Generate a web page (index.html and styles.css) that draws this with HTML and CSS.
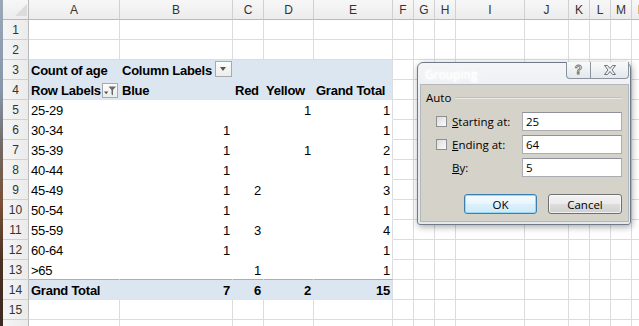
FILE: index.html
```html
<!DOCTYPE html>
<html lang="en">
<head>
    <meta charset="UTF-8">
    <title>Count of age - Pivot</title>
    <link rel="stylesheet" href="styles.css">
</head>
<body>
    <div class="desk"></div>

    <div class="sheet">
        <div class="row hd">
            <span class="corner"><svg width="14" height="14" viewBox="0 0 14 14"><path d="M13 1V13H1z" fill="#dcdcdc"/></svg></span>
            <span>A</span><span>B</span><span>C</span><span>D</span><span>E</span><span>F</span><span>G</span><span>H</span><span>I</span><span>J</span><span>K</span><span>L</span><span>M</span><span>N</span>
        </div>

        <div class="row"><span class="rh">1</span><span></span><span></span><span></span><span></span><span></span><span></span><span></span><span></span><span></span><span></span><span></span><span></span><span></span><span></span></div>
        <div class="row"><span class="rh">2</span><span></span><span></span><span></span><span></span><span></span><span></span><span></span><span></span><span></span><span></span><span></span><span></span><span></span><span></span></div>

        <!-- pivot header -->
        <div class="row">
            <span class="rh">3</span>
            <span class="pv bd b">Count of age</span>
            <span class="pv bd b fl"><span>Column Labels</span><i class="dd"></i></span>
            <span class="pv bd"></span><span class="pv bd"></span><span class="pv bd e"></span>
            <span></span><span></span><span></span><span></span><span></span><span></span><span></span><span></span><span></span>
        </div>
        <div class="row">
            <span class="rh">4</span>
            <span class="pv bd b fl"><span>Row Labels</span><i class="flt"><svg width="14" height="13" viewBox="0 0 14 13"><path d="M1 7.5h4.4L3.2 10.2z" fill="#5a5a5a"/><path d="M5.5 2.5h7.5l-3 3.6v5.4l-1.5-1.2V6.1z" fill="#6a6a6a"/></svg></i></span>
            <span class="pv bd b">Blue</span>
            <span class="pv bd b">Red</span>
            <span class="pv bd b">Yellow</span>
            <span class="pv bd b e">Grand Total</span>
            <span></span><span></span><span></span><span></span><span></span><span></span><span></span><span></span><span></span>
        </div>

        <!-- pivot body -->
        <div class="row"><span class="rh">5</span><span class="pv">25-29</span><span class="pv n"></span><span class="pv n"></span><span class="pv n">1</span><span class="pv n e">1</span><span></span><span></span><span></span><span></span><span></span><span></span><span></span><span></span><span></span></div>
        <div class="row"><span class="rh">6</span><span class="pv">30-34</span><span class="pv n">1</span><span class="pv n"></span><span class="pv n"></span><span class="pv n e">1</span><span></span><span></span><span></span><span></span><span></span><span></span><span></span><span></span><span></span></div>
        <div class="row"><span class="rh">7</span><span class="pv">35-39</span><span class="pv n">1</span><span class="pv n"></span><span class="pv n">1</span><span class="pv n e">2</span><span></span><span></span><span></span><span></span><span></span><span></span><span></span><span></span><span></span></div>
        <div class="row"><span class="rh">8</span><span class="pv">40-44</span><span class="pv n">1</span><span class="pv n"></span><span class="pv n"></span><span class="pv n e">1</span><span></span><span></span><span></span><span></span><span></span><span></span><span></span><span></span><span></span></div>
        <div class="row"><span class="rh">9</span><span class="pv">45-49</span><span class="pv n">1</span><span class="pv n">2</span><span class="pv n"></span><span class="pv n e">3</span><span></span><span></span><span></span><span></span><span></span><span></span><span></span><span></span><span></span></div>
        <div class="row"><span class="rh">10</span><span class="pv">50-54</span><span class="pv n">1</span><span class="pv n"></span><span class="pv n"></span><span class="pv n e">1</span><span></span><span></span><span></span><span></span><span></span><span></span><span></span><span></span><span></span></div>
        <div class="row"><span class="rh">11</span><span class="pv">55-59</span><span class="pv n">1</span><span class="pv n">3</span><span class="pv n"></span><span class="pv n e">4</span><span></span><span></span><span></span><span></span><span></span><span></span><span></span><span></span><span></span></div>
        <div class="row"><span class="rh">12</span><span class="pv">60-64</span><span class="pv n">1</span><span class="pv n"></span><span class="pv n"></span><span class="pv n e">1</span><span></span><span></span><span></span><span></span><span></span><span></span><span></span><span></span><span></span></div>
        <div class="row"><span class="rh">13</span><span class="pv ln">&gt;65</span><span class="pv n ln"></span><span class="pv n ln">1</span><span class="pv n ln"></span><span class="pv n e ln">1</span><span></span><span></span><span></span><span></span><span></span><span></span><span></span><span></span><span></span></div>

        <!-- grand total -->
        <div class="row"><span class="rh">14</span><span class="pv bd b">Grand Total</span><span class="pv bd b n">7</span><span class="pv bd b n">6</span><span class="pv bd b n">2</span><span class="pv bd b n e">15</span><span></span><span></span><span></span><span></span><span></span><span></span><span></span><span></span><span></span></div>

        <div class="row"><span class="rh">15</span><span></span><span></span><span></span><span></span><span></span><span></span><span></span><span></span><span></span><span></span><span></span><span></span><span></span><span></span></div>
        <div class="row"><span class="rh"></span><span></span><span></span><span></span><span></span><span></span><span></span><span></span><span></span><span></span><span></span><span></span><span></span><span></span><span></span></div>
    </div>

    <!-- grouping dialog -->
    <div class="dlg">
        <div class="cap">
            <span class="ttl">Grouping</span>
            <div class="cbs">
                <span class="cb help">?</span>
                <span class="cb close"><svg width="12" height="10" viewBox="0 0 12 10"><path d="M.5.5h3l2.5 3 2.5-3h3L8 5l3.5 4.5h-3L6 6.5l-2.5 3h-3L4 5z" fill="#f2f2f2" stroke="#6b737b" stroke-width="1"/></svg></span>
            </div>
        </div>
        <div class="dbody">
            <div class="legend"><span>Auto</span><i class="rule"></i></div>
            <div class="frow"><span class="chk"></span><span class="lbl"><u>S</u>tarting at:</span><span class="inp">25</span></div>
            <div class="frow"><span class="chk"></span><span class="lbl"><u>E</u>nding at:</span><span class="inp">64</span></div>
            <div class="frow"><span class="chk off"></span><span class="lbl"><u>B</u>y:</span><span class="inp">5</span></div>
            <div class="btns">
                <button class="btn ok">OK</button>
                <button class="btn">Cancel</button>
            </div>
        </div>
    </div>
</body>
</html>
```

FILE: styles.css
```css
body {
    margin: 0;
    width: 639px;
    height: 326px;
    overflow: hidden;
    display: flex;
    position: relative;
    background: #fff;
    font-family: "Liberation Sans", Arial, sans-serif;
}

/* bit of desktop showing at the left edge */
.desk {
    width: 3px;
    flex: none;
    background: linear-gradient(#9aa8b8 0%, #8796a8 28%, #6f6a66 45%, #7a5236 62%, #4b3224 80%, #3a2a22 100%);
}

.sheet {
    flex: 1;
    overflow: hidden;
}

.row {
    display: grid;
    grid-template-columns: 26px 91px 113px 31px 50px 79px 21px 21px 21px 69px 44px 21px 21px 21px 21px;
    height: 20px;
}
.row > span {
    box-sizing: border-box;
    height: 20px;
    border-right: 1px solid #dadcdd;
    border-bottom: 1px solid #dadcdd;
    padding: 2px 2px 0;
    line-height: 17px;
    font-size: 13px;
    letter-spacing: -0.25px;
    color: #000;
    overflow: hidden;
    white-space: nowrap;
}

/* column letters */
.hd > span {
    background: linear-gradient(#f7f7f7, #ececec);
    border-right-color: #d0d0d0;
    border-bottom-color: #b9b9b9;
    text-align: center;
    font-size: 12px;
    letter-spacing: 0;
    color: #333;
}
.hd > .corner {
    padding: 3px 0 0 11px;
    border-right-color: #b9b9b9;
}
.corner svg {
    display: block;
}

/* row numbers */
.row > .rh {
    background: linear-gradient(90deg, #f5f5f5, #ebebeb);
    border-right-color: #b9b9b9;
    border-bottom-color: #d0d0d0;
    text-align: center;
    font-size: 12px;
    letter-spacing: 0;
    color: #333;
}

/* pivot table cells */
.row > .pv {
    border-color: transparent;
}
.row > .pv.e {
    border-right-color: #dadcdd;
}
.row > .pv.ln {
    border-bottom-color: #95b3d7;
}
.row > .bd {
    background: #dce6f1;
}
.b {
    font-weight: bold;
}
.n {
    text-align: right;
}

.row > .fl {
    display: flex;
    justify-content: space-between;
    padding-right: 0;
}

.dd {
    box-sizing: border-box;
    width: 17px;
    height: 16px;
    margin-top: -1px;
    border: 1px solid #a9a9a9;
    background: linear-gradient(#fdfdfd, #ececec);
    position: relative;
}
.dd::after {
    content: "";
    position: absolute;
    left: 4px;
    top: 5px;
    border-left: 3.5px solid transparent;
    border-right: 3.5px solid transparent;
    border-top: 4px solid #555;
}

.flt {
    box-sizing: border-box;
    width: 16px;
    height: 15px;
    margin-top: 1px;
    margin-right: 1px;
    border: 1px solid #a9a9a9;
    background: linear-gradient(#fdfdfd, #ececec);
}
.flt svg {
    display: block;
}

/* Grouping dialog */
.dlg {
    position: absolute;
    left: 417px;
    top: 62px;
    width: 214px;
    height: 163px;
    box-sizing: border-box;
    border: 1px solid #6f7b88;
    border-radius: 6px 6px 3px 3px;
    padding: 0 1px 2px 2px;
    background: linear-gradient(#f3f5f7, #e9ecef 30%, #e6e9ec);
    box-shadow: 1px 2px 7px rgba(0, 0, 0, 0.35);
    display: flex;
    flex-direction: column;
    font-family: "Open Sans", "Noto Sans", sans-serif;
    font-size: 11.5px;
    color: #000;
}

.cap {
    height: 21px;
    display: flex;
    align-items: flex-start;
}
/* glass caption: title text barely shows */
.ttl {
    margin: 3px 0 0 5px;
    font-size: 12px;
    color: rgba(255, 255, 255, 0.95);
    text-shadow: 0 0 4px #fff, 0 0 8px #fff, 0 0 2px #fff;
}
.cbs {
    margin-left: auto;
    margin-top: -1px;
    display: flex;
}
.cb {
    box-sizing: border-box;
    height: 17px;
    border: 1px solid #8b949d;
    border-top: none;
    background: linear-gradient(#f8f9fa, #e4e8ec);
    display: flex;
    align-items: center;
    justify-content: center;
}
.help {
    width: 24px;
    border-right: none;
    border-bottom-left-radius: 4px;
    font-family: "Liberation Sans", Arial, sans-serif;
    font-weight: bold;
    font-size: 12px;
    color: #f4f4f4;
    -webkit-text-stroke: 0.8px #67707a;
}
.close {
    width: 39px;
    border-bottom-right-radius: 4px;
}
.close svg {
    display: block;
}

.dbody {
    flex: 1;
    background: #d5d2ca;
    border: 1px solid #b3b8bd;
    padding: 6px 6px 0 5px;
}

.legend {
    display: flex;
    align-items: center;
    height: 14px;
    line-height: 14px;
}
.rule {
    flex: 1;
    margin-left: 4px;
    border-top: 1px solid #c2bfb8;
    border-bottom: 1px solid #ebe9e5;
}

.frow {
    display: flex;
    align-items: center;
    height: 19px;
    margin-top: 4px;
}
.legend + .frow {
    margin-top: 7px;
}
.chk {
    box-sizing: border-box;
    width: 11px;
    height: 11px;
    margin: 0 5px 0 10px;
    border: 1px solid #8e8f8f;
    background: linear-gradient(135deg, #dcdcdc, #fbfbfb);
}
.chk.off {
    visibility: hidden;
}
.lbl {
    flex: 1;
}
.inp {
    box-sizing: border-box;
    width: 100px;
    height: 19px;
    padding: 0 0 0 3px;
    line-height: 17px;
    background: #fff;
    border: 1px solid #abadb3;
    border-top-color: #8f929a;
}

.btns {
    display: flex;
    justify-content: flex-end;
    gap: 11px;
    margin-top: 17px;
}
.btn {
    box-sizing: border-box;
    width: 74px;
    height: 20px;
    padding: 0;
    font: inherit;
    color: #000;
    border: 1px solid #707070;
    border-radius: 3px;
    background: linear-gradient(#f2f2f2 0%, #ebebeb 50%, #dddddd 51%, #cfcfcf 100%);
    box-shadow: inset 0 0 0 1px rgba(255, 255, 255, 0.7);
}
.btn.ok {
    width: 73px;
    border-color: #3c7fb1;
    background: linear-gradient(#f4fbfe 0%, #e9f6fd 50%, #dcf0fb 51%, #cfe9f7 100%);
    box-shadow: inset 0 0 0 1px #98d8f3;
}
```
